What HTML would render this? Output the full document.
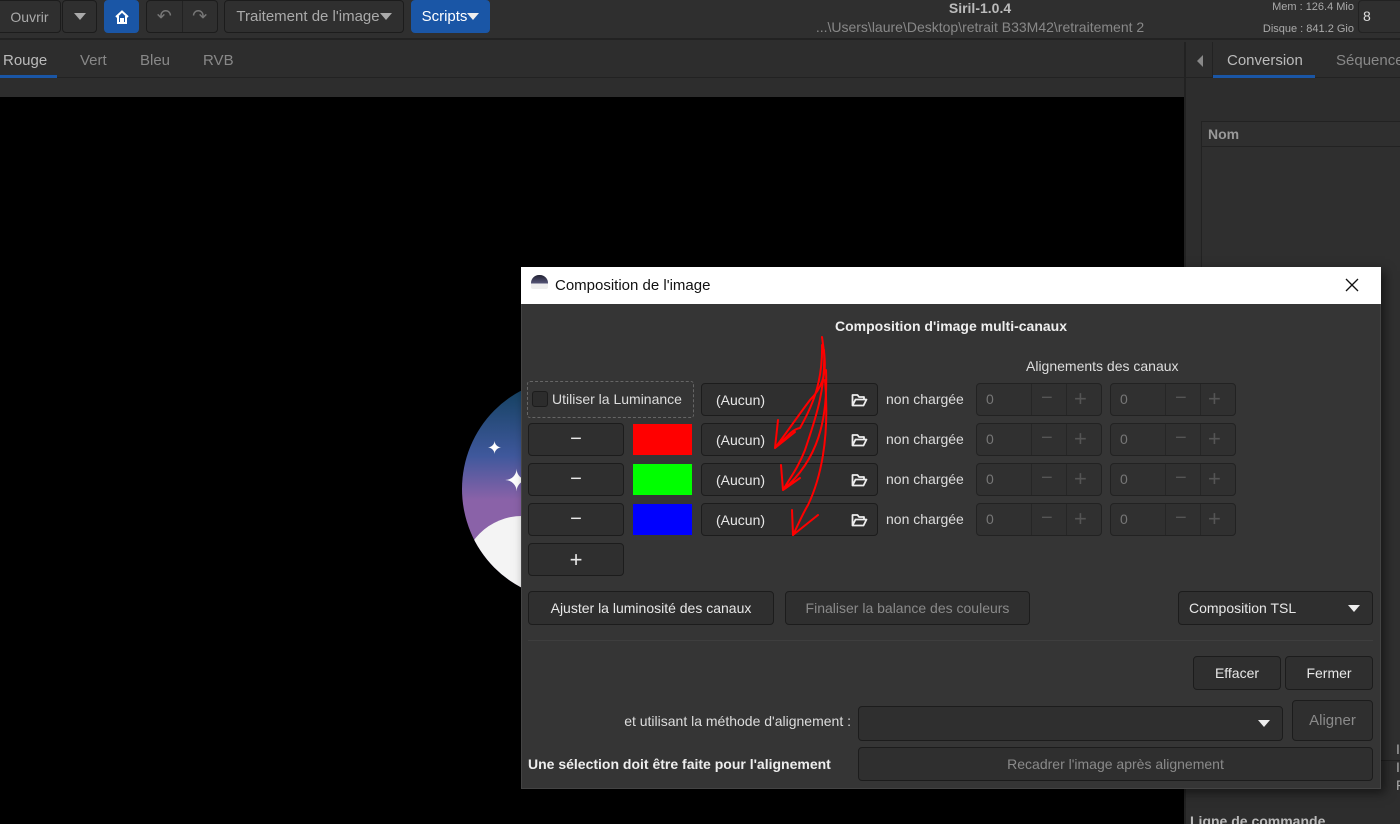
<!DOCTYPE html>
<html><head><meta charset="utf-8"><style>
*{box-sizing:border-box;margin:0;padding:0}
html,body{width:1400px;height:824px;overflow:hidden}
body{background:#2d2d2d;font-family:"Liberation Sans",sans-serif;font-size:14px;color:#ddd;position:relative}
.a{position:absolute}
.btn{position:absolute;border:1px solid #1c1c1c;border-radius:4px;background:#2f2f2f;color:#e8e8e8;display:flex;align-items:center;justify-content:center}
.dis{color:#8a8a8a}
.spin{position:absolute;width:126px;height:33px;border:1px solid #222;border-radius:4px;background:#303030;color:#777}
.spin span{position:absolute;top:7px}
.spin i{position:absolute;top:0;bottom:0;width:1px;background:#262626}
.tri{display:inline-block;width:0;height:0;border-left:6px solid transparent;border-right:6px solid transparent;border-top:7px solid #eee}
</style></head><body>
<div class="a" style="left:0;top:0;width:1400px;height:40px;background:#2f2f2f;border-bottom:2px solid #222"></div>
<div class="btn dis" style="left:-6px;top:0;width:67px;height:33px;color:#aaa">&nbsp;Ouvrir</div>
<div class="btn" style="left:62px;top:0;width:35px;height:33px"><span class="tri" style="border-top-color:#aaa"></span></div>
<div class="btn" style="left:104px;top:0;width:35px;height:33px;background:#1a56a6;border-color:#1a56a6"><svg width="16" height="16" viewBox="0 0 16 16"><path d="M2 8L8 2.5 14 8M4 7v7h8V7M7 14v-4h2v4" fill="none" stroke="#fff" stroke-width="2"/></svg></div>
<div class="btn" style="left:146px;top:0;width:72px;height:33px;color:#777;font-size:18px"><span style="width:36px;text-align:center">↶</span><span style="width:1px;height:31px;background:#222"></span><span style="width:36px;text-align:center">↷</span></div>
<div class="btn" style="left:224px;top:0;width:180px;height:33px;color:#aaa;font-size:15px">Traitement de l'image<span class="tri" style="border-top-color:#aaa"></span></div>
<div class="btn" style="left:411px;top:0;width:79px;height:33px;background:#1a56a6;border-color:#1a56a6;color:#fff;font-size:15px">Scripts<span class="tri"></span></div>
<div class="a" style="left:700px;top:0;width:560px;text-align:center;font-weight:bold;color:#bbb;font-size:14px">Siril-1.0.4</div>
<div class="a" style="left:700px;top:19px;width:560px;text-align:center;color:#888;font-size:14px">...\Users\laure\Desktop\retrait B33M42\retraitement 2</div>
<div class="a" style="left:1200px;top:1px;width:154px;text-align:right;color:#aaa;font-size:11px">Mem : 126.4 Mio</div>
<div class="a" style="left:1200px;top:23px;width:154px;text-align:right;color:#aaa;font-size:11px">Disque : 841.2 Gio</div>
<div class="a" style="left:1358px;top:0;width:50px;height:33px;border:1px solid #222;border-radius:4px;padding:7px 4px;color:#ddd">8</div>
<div class="a" style="left:0;top:42px;width:1186px;height:36px;border-bottom:1px solid #222"></div>
<div class="a" style="left:3px;top:52px;color:#bbb;font-size:15px">Rouge</div>
<div class="a" style="left:0;top:75px;width:57px;height:3px;background:#1a56a6"></div>
<div class="a" style="left:80px;top:52px;color:#888;font-size:15px">Vert</div>
<div class="a" style="left:140px;top:52px;color:#888;font-size:15px">Bleu</div>
<div class="a" style="left:203px;top:52px;color:#888;font-size:15px">RVB</div>
<div class="a" style="left:0;top:97px;width:1184px;height:727px;background:#000"></div>
<div class="a" style="left:1184px;top:42px;width:2px;height:782px;background:#222"></div>
<div class="a" style="left:1186px;top:42px;width:214px;height:36px;border-bottom:1px solid #222"></div>
<div class="a" style="left:1212px;top:42px;width:1px;height:36px;background:#222"></div>
<div class="a" style="left:1197px;top:55px;width:0;height:0;border-top:6px solid transparent;border-bottom:6px solid transparent;border-right:6px solid #888"></div>
<div class="a" style="left:1227px;top:52px;color:#bbb;font-size:15px">Conversion</div>
<div class="a" style="left:1213px;top:75px;width:102px;height:3px;background:#1a56a6"></div>
<div class="a" style="left:1336px;top:52px;color:#888;font-size:15px">Séquence</div>
<div class="a" style="left:1201px;top:121px;width:199px;height:640px;background:#2f2f2f;border:1px solid #222;border-right:none"></div>
<div class="a" style="left:1201px;top:121px;width:199px;height:26px;border-bottom:1px solid #222;padding:5px 7px;font-weight:bold;color:#999">Nom</div>
<div class="a" style="left:1396px;top:740px;color:#aaa;line-height:18px">I<br>I<br>F</div>
<div class="a" style="left:1190px;top:813px;font-weight:bold;color:#bbb">Ligne de commande</div>
<div class="a" style="left:462px;top:378px;width:220px;height:222px;border-radius:50%;overflow:hidden;background:linear-gradient(#0e3e58 0%,#3f589c 35%,#8a62a8 55%,#8a62a8 65%)">
<div class="a" style="left:0;top:138px;width:220px;height:100px;background:#f4f4f4;border-radius:60px 30px 0 0"></div>
<div class="a" style="left:25px;top:60px;color:#fff;font-size:18px">✦</div>
<div class="a" style="left:42px;top:86px;color:#fff;font-size:30px">✦</div>
</div>
<div class="a" style="left:521px;top:267px;width:860px;height:522px;background:#353535;border:1px solid #444;box-shadow:4px 4px 10px rgba(0,0,0,.5)"></div>
<div class="a" style="left:521px;top:267px;width:860px;height:37px;background:#fff;color:#111;font-size:15px;padding:10px 0 0 34px">Composition de l'image</div>
<div class="a" style="left:531px;top:275px;width:17px;height:14px;border-radius:8px 8px 2px 2px;background:linear-gradient(#223 0,#557 60%,#eee 61%)"></div>
<svg class="a" style="left:1345px;top:278px" width="14" height="14"><path d="M1 1L13 13M13 1L1 13" stroke="#111" stroke-width="1.3"/></svg>
<div class="a" style="left:521px;top:318px;width:860px;text-align:center;font-weight:bold;color:#eee">Composition d'image multi-canaux</div>
<div class="a" style="left:1026px;top:358px;color:#ddd">Alignements des canaux</div>
<div class="a" style="left:527px;top:381px;width:167px;height:37px;border:1px dashed #666;border-radius:3px"></div>
<div class="a" style="left:532px;top:391px;width:16px;height:16px;border:1px solid #1c1c1c;border-radius:3px;background:#2c2c2c"></div>
<div class="a" style="left:552px;top:391px;color:#ddd">Utiliser la Luminance</div>
<div class="btn" style="left:528px;top:423px;width:96px;height:33px;font-size:20px">−</div>
<div class="btn" style="left:528px;top:463px;width:96px;height:33px;font-size:20px">−</div>
<div class="btn" style="left:528px;top:503px;width:96px;height:33px;font-size:20px">−</div>
<div class="btn" style="left:528px;top:543px;width:96px;height:33px;font-size:22px">+</div>
<div class="a" style="left:633px;top:424px;width:59px;height:31px;background:#f00"></div>
<div class="a" style="left:633px;top:464px;width:59px;height:31px;background:#0f0"></div>
<div class="a" style="left:633px;top:504px;width:59px;height:31px;background:#00f"></div>
<div id="rows"></div>
<script>
var h='';[383,423,463,503].forEach(function(y){
h+='<div class="btn" style="left:701px;top:'+y+'px;width:177px;height:33px;justify-content:flex-start;padding-left:14px">(Aucun)<svg style="position:absolute;right:9px;top:9px" width="17" height="14" viewBox="0 0 17 14"><path d="M1.5 12.5V2h5l1.5 2h5v2.5M1.5 12.5h11l3-6h-11z" fill="none" stroke="#eee" stroke-width="1.8" stroke-linejoin="round"/></svg></div>';
h+='<div class="a" style="left:886px;top:'+(y+8)+'px;color:#ddd">non chargée</div>';
[976,1110].forEach(function(x){h+='<div class="spin" style="left:'+x+'px;top:'+y+'px"><span style="left:9px">0</span><i style="left:54px"></i><i style="left:89px"></i><span style="left:64px;top:3px;font-size:20px;color:#555">−</span><span style="left:97px;top:2px;font-size:22px;color:#555">+</span></div>';});
});document.getElementById('rows').outerHTML=h;
</script>
<svg class="a" style="left:0;top:0" width="1400" height="824" fill="none" stroke="#f00" stroke-width="2" stroke-linecap="round">
<path d="M822 337C825 360 830 380 810 400C795 420 785 435 775 448M822 345C823 385 810 410 800 428C790 430 785 440 775 448M775 448L778 420M775 448L795 432"/>
<path d="M824 350C826 390 815 420 805 450C798 468 790 478 783 490M783 490L781 465M783 490L800 478M826 370C828 420 818 460 783 490"/>
<path d="M825 380C830 440 820 480 808 505C802 515 798 525 793 535M793 535L792 510M793 535L818 515"/>
</svg>
<div class="btn" style="left:528px;top:591px;width:246px;height:34px">Ajuster la luminosité des canaux</div>
<div class="btn dis" style="left:785px;top:591px;width:245px;height:34px">Finaliser la balance des couleurs</div>
<div class="btn" style="left:1178px;top:591px;width:195px;height:34px;justify-content:space-between;padding:0 12px 0 10px">Composition TSL<span class="tri"></span></div>
<div class="a" style="left:528px;top:640px;width:845px;height:1px;background:#3e3e3e"></div>
<div class="btn" style="left:1193px;top:656px;width:88px;height:34px">Effacer</div>
<div class="btn" style="left:1285px;top:656px;width:88px;height:34px">Fermer</div>
<div class="a" style="left:521px;top:713px;width:330px;text-align:right;color:#ddd">et utilisant la méthode d'alignement :</div>
<div class="btn" style="left:858px;top:706px;width:425px;height:35px;justify-content:flex-end;padding-right:12px"><span class="tri"></span></div>
<div class="btn dis" style="left:1292px;top:700px;width:81px;height:41px;font-size:15px">Aligner</div>
<div class="a" style="left:528px;top:756px;font-weight:bold;color:#eee">Une sélection doit être faite pour l'alignement</div>
<div class="btn dis" style="left:858px;top:747px;width:515px;height:34px">Recadrer l'image après alignement</div>
</body></html>
